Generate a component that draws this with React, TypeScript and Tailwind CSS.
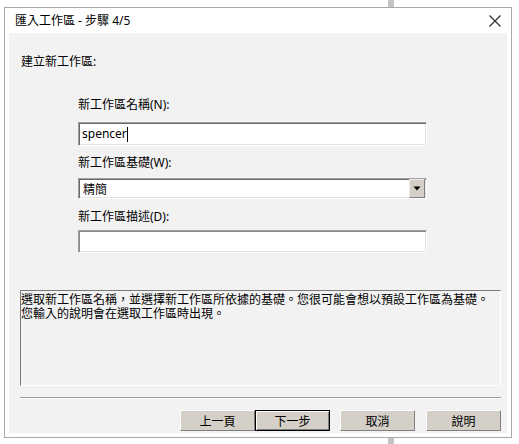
import React from "react";

const ui = { fontFamily: '"Noto Sans", "Noto Sans CJK TC", sans-serif' };
const cjk = { fontFamily: '"Noto Sans CJK TC", "Noto Sans", sans-serif' };

function Btn({ label, def = false, className = "" }: { label: string; def?: boolean; className?: string }) {
  return (
    <div
      className={
        "w-[75px] h-[21px] bg-[#d4d0c8] flex items-center justify-center text-[12px] leading-[14px] text-black " +
        (def
          ? "border border-black shadow-[inset_1px_1px_0_#ffffff,inset_-1px_-1px_0_#808080] "
          : "border-t border-l border-t-white border-l-white border-b border-r border-b-[#808080] border-r-[#808080] ") +
        className
      }
      style={cjk}
    >
      {label}
    </div>
  );
}

export default function App() {
  return (
    <div className="w-[519px] h-[444px] bg-white relative overflow-hidden" style={ui}>
      <div className="absolute left-[388px] top-0 w-[6px] h-[444px] bg-[#c4c4c4]" />
      <div className="relative ml-[4px] mt-[7px] w-[508px] h-[431px] border border-[#a9a9a9] bg-white flex flex-col">
        {/* title bar */}
        <div className="h-[25px] flex items-center justify-between pl-[10px] pr-[9px]">
          <span className="text-[12px] leading-[16px] text-black pt-[1px]">匯入工作區 - 步驟 4/5</span>
          <svg width="14" height="14" viewBox="0 0 14 14" className="mt-[1px]">
            <path d="M1.5 1.5 L12.5 12.5 M12.5 1.5 L1.5 12.5" stroke="#333" strokeWidth="1.3" fill="none" />
          </svg>
        </div>
        {/* content */}
        <div className="mx-[4px] h-[400px] bg-[#f2f2f2] flex flex-col">
          <div className="mt-[21px] ml-[12px] text-[12px] leading-[16px] text-black">建立新工作區:</div>

          <div className="ml-[69px] w-[349px] flex flex-col">
            <div className="mt-[27px] text-[12px] leading-[16px] text-black">新工作區名稱(N):</div>
            <div className="mt-[9px] h-[24px] bg-white border border-t-[#a0a0a0] border-l-[#a0a0a0] border-b-white border-r-white shadow-[inset_1px_1px_0_#696969,inset_-1px_-1px_0_#e3e3e3] flex items-center pl-[3px]">
              <span className="text-[12px] leading-[16px] text-black">spencer</span>
              <span className="w-[1px] h-[15px] bg-black" />
            </div>

            <div className="mt-[9px] text-[12px] leading-[16px] text-black">新工作區基礎(W):</div>
            <div className="mt-[7px] h-[21px] bg-white border border-t-[#a0a0a0] border-l-[#a0a0a0] border-b-white border-r-white shadow-[inset_1px_1px_0_#696969,inset_-1px_-1px_0_#e3e3e3] flex items-center justify-between">
              <span className="pl-[4px] text-[12px] leading-[16px] text-black" style={cjk}>精簡</span>
              <div className="w-[16px] h-[19px] mr-[1px] bg-[#d4d0c8] border-t border-l border-t-[#eeeeee] border-l-[#eeeeee] border-b border-r border-b-[#808080] border-r-[#808080] flex items-center justify-center">
                <svg width="8" height="5" viewBox="0 0 8 5">
                  <path d="M0.5 0.5 L7.5 0.5 L4 4.5 Z" fill="#000" />
                </svg>
              </div>
            </div>

            <div className="mt-[10px] text-[12px] leading-[16px] text-black">新工作區描述(D):</div>
            <div className="mt-[5px] h-[23px] bg-white border border-t-[#a0a0a0] border-l-[#a0a0a0] border-b-white border-r-white shadow-[inset_1px_1px_0_#8a8a8a,inset_-1px_-1px_0_#e3e3e3]" />
          </div>

          <div className="mt-[37px] ml-[11px] w-[481px] h-[96px] border border-t-[#7a7a7a] border-l-[#7a7a7a] border-b-white border-r-white bg-[#f2f2f2] pt-[1px] whitespace-nowrap text-[12px] text-black flex flex-col" style={cjk}>
            <div className="h-[14px] leading-[14px]">選取新工作區名稱，並選擇新工作區所依據的基礎。您很可能會想以預設工作區為基礎。</div>
            <div className="h-[14px] leading-[14px]">您輸入的說明會在選取工作區時出現。</div>
          </div>

          <div className="mt-[11px] ml-[11px] w-[481px] h-[2px] border-t border-t-[#a0a0a0] border-b border-b-white" />

          <div className="mt-[11px] flex pl-[171px]">
            <Btn label="上一頁" />
            <Btn label="下一步" def />
            <Btn label="取消" className="ml-[10px]" />
            <Btn label="說明" className="ml-[11px]" />
          </div>
        </div>
      </div>
    </div>
  );
}
